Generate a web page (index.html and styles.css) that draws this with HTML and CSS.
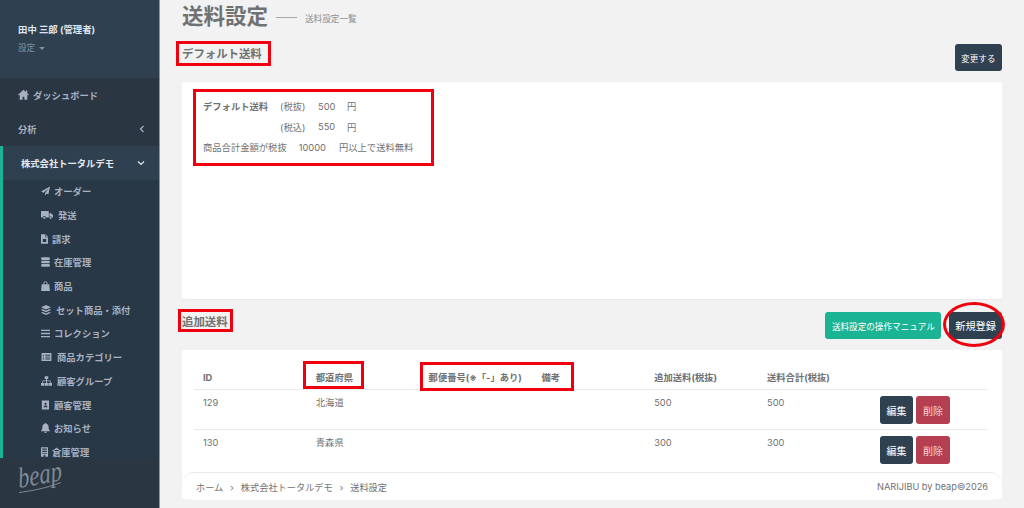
FILE: index.html
```html
<!DOCTYPE html>
<html lang="ja">
  <head>
    <meta charset="UTF-8" />
    <meta name="viewport" content="width=device-width, initial-scale=1.0" />
    <title>送料設定</title>
    <link rel="stylesheet" href="styles.css">
  </head>
  <body>
    <aside class="sidebar">
      <div class="profile">
        <div class="profile-name">田中 三郎 (管理者)</div>
        <div class="profile-link">設定 <span class="caret"></span></div>
      </div>

      <nav class="nav">
        <a class="nav-item">
          <svg class="icon" width="11" height="11" viewBox="0 0 16 15"><path d="M8 .5 0 7.700l1 1.100 1.500-1.300V15h4.200v-4.400h2.600V15h4.200V7.500l1.500 1.300 1-1.100-2.500-2.200V1.500h-2v2.400z"/></svg>
          ダッシュボード
        </a>
        <a class="nav-item nav-between">
          分析
          <svg class="chevron" width="8" height="8" viewBox="0 0 8 8"><path d="M5.500 1 2.500 4l3 3"/></svg>
        </a>
        <a class="nav-item nav-active">
          株式会社トータルデモ
          <svg class="chevron" width="8" height="8" viewBox="0 0 8 8"><path d="M1 2.500 4 5.500l3-3"/></svg>
        </a>
        <ul class="submenu">
          <li class="sub-item">
            <svg class="icon" width="9" height="10" viewBox="0 0 16 16"><path d="M16 0 0 9l4.500 2L13 4l-6 8v4l3-3.500 3 1.500z"/></svg>
            オーダー
          </li>
          <li class="sub-item sub-wide">
            <svg class="icon" width="12" height="10" viewBox="0 0 20 16"><path d="M1 1.500h11a1 1 0 0 1 1 1V12H8a2.500 2.500 0 0 0-5 0H1a1 1 0 0 1-1-1V2.500a1 1 0 0 1 1-1zM14 5h3l3 3.500V12h-1.500a2.500 2.500 0 0 0-4.500-.5z"/><circle cx="5.500" cy="13" r="1.800"/><circle cx="16" cy="13" r="1.800"/></svg>
            発送
          </li>
          <li class="sub-item">
            <svg class="icon" width="7" height="10" viewBox="0 0 12 16"><path fill-rule="evenodd" d="M0 0h7v5h5v11H0zM3 8v5h6V8zM8 0l4 4H8z"/></svg>
            請求
          </li>
          <li class="sub-item">
            <svg class="icon" width="9" height="10" viewBox="0 0 14 16"><rect y="0.500" width="14" height="4.300" rx="2"/><rect y="5.800" width="14" height="4.300" rx="2"/><rect y="11.100" width="14" height="4.300" rx="2"/></svg>
            在庫管理
          </li>
          <li class="sub-item">
            <svg class="icon" width="9" height="10" viewBox="0 0 14 16"><path d="M1 5h12l1 11H0z"/><path class="line" d="M4.500 6V3.500a2.500 2.500 0 0 1 5 0V6"/></svg>
            商品
          </li>
          <li class="sub-item sub-wide">
            <svg class="icon" width="10" height="10" viewBox="0 0 16 16"><path d="M8 0l8 3.500L8 7 0 3.500zM2.500 6.500 8 9l5.500-2.500L16 8l-8 3.500L0 8zM2.500 11 8 13.500 13.500 11 16 12.500 8 16 0 12.500z"/></svg>
            セット商品・添付
          </li>
          <li class="sub-item">
            <svg class="icon" width="9" height="9" viewBox="0 0 14 14"><path d="M0 1h14v2H0zM0 6h14v2H0zM0 11h14v2H0z"/></svg>
            コレクション
          </li>
          <li class="sub-item sub-wide">
            <svg class="icon" width="11" height="8" viewBox="0 0 16 13"><path fill-rule="evenodd" d="M0 0h16v13H0zM2 3v1.500h2V3zM6 3v1.500h8V3zM2 6v1.500h2V6zM6 6v1.500h8V6zM2 9v1.500h2V9zM6 9v1.500h8V9z"/></svg>
            商品カテゴリー
          </li>
          <li class="sub-item sub-wide">
            <svg class="icon" width="11" height="10" viewBox="0 0 16 14"><path d="M5.500 0h5v4h-1.700v2.200H14V10h2v4h-5v-4h2V7.500H8.800V10H10.500v4h-5v-4h2V7.500H3V10h2v4H0v-4h2V6.200h5.200V4H5.500z"/></svg>
            顧客グループ
          </li>
          <li class="sub-item sub-wide">
            <svg class="icon" width="8" height="10" viewBox="0 0 14 16"><path fill-rule="evenodd" d="M1.500 0H14v16H1.500zM8 4a2 2 0 1 0 0 4 2 2 0 0 0 0-4zM4.500 12h7c0-2-1.500-3-3.500-3s-3.500 1-3.500 3z"/></svg>
            顧客管理
          </li>
          <li class="sub-item">
            <svg class="icon" width="9" height="10" viewBox="0 0 14 16"><path d="M7 0a1.300 1.300 0 0 1 1.300 1.300C11 2 12 4 12 7c0 3 1 4 2 5v1H0v-1c1-1 2-2 2-5 0-3 1-5 3.700-5.700A1.300 1.300 0 0 1 7 0zM5 14h4a2 2 0 0 1-4 0z"/></svg>
            お知らせ
          </li>
          <li class="sub-item">
            <svg class="icon" width="7" height="10" viewBox="0 0 12 16"><path fill-rule="evenodd" d="M0 0h12v16H7.500v-3h-3v3H0zM2 2v2h8V2zM2 6v2h8V6zM2 10v1.500h8V10z"/></svg>
            倉庫管理
          </li>
        </ul>
      </nav>

      <div class="sidebar-logo">
        <span class="logo-text">beap</span>
        <svg class="logo-swash" width="46" height="14" viewBox="0 0 46 14"><path d="M2 12.500C14 11 30 8 44 2.500"/></svg>
      </div>
    </aside>

    <main class="main">
      <header class="page-title">
        <h1>送料設定</h1>
        <span class="title-rule"></span>
        <span class="title-sub">送料設定一覧</span>
      </header>

      <div class="section-head section-first">
        <h2>デフォルト送料</h2>
        <div class="actions">
          <button class="btn btn-dark btn-small">変更する</button>
        </div>
      </div>

      <section class="card card-default">
        <div class="fee-row">
          <b class="fee-label">デフォルト送料</b>
          <span class="fee-tax">(税抜)</span>
          <span class="fee-value">500</span>
          <span>円</span>
        </div>
        <div class="fee-row">
          <span class="fee-label"></span>
          <span class="fee-tax">(税込)</span>
          <span class="fee-value">550</span>
          <span>円</span>
        </div>
        <div class="fee-row fee-free">
          <span>商品合計金額が税抜</span>
          <span class="fee-amount">10000</span>
          <span>円以上で送料無料</span>
        </div>
      </section>

      <div class="section-head">
        <h2>追加送料</h2>
        <div class="actions">
          <button class="btn btn-green btn-small">送料設定の操作マニュアル</button>
          <button class="btn btn-dark">新規登録</button>
        </div>
      </div>

      <section class="card card-table">
        <table class="fee-table">
          <thead>
            <tr>
              <th>ID</th>
              <th>都道府県</th>
              <th>郵便番号(※「-」あり)</th>
              <th>備考</th>
              <th>追加送料(税抜)</th>
              <th>送料合計(税抜)</th>
              <th></th>
            </tr>
          </thead>
          <tbody>
            <tr>
              <td>129</td>
              <td>北海道</td>
              <td></td>
              <td></td>
              <td>500</td>
              <td>500</td>
              <td>
                <div class="row-actions">
                  <button class="btn btn-dark btn-row">編集</button>
                  <button class="btn btn-red btn-row">削除</button>
                </div>
              </td>
            </tr>
            <tr>
              <td>130</td>
              <td>青森県</td>
              <td></td>
              <td></td>
              <td>300</td>
              <td>300</td>
              <td>
                <div class="row-actions">
                  <button class="btn btn-dark btn-row">編集</button>
                  <button class="btn btn-red btn-row">削除</button>
                </div>
              </td>
            </tr>
          </tbody>
        </table>
      </section>

      <footer class="footer">
        <div class="crumbs">
          <span>ホーム</span><span class="crumb-sep">›</span><span>株式会社トータルデモ</span><span class="crumb-sep">›</span><span>送料設定</span>
        </div>
        <div class="copyright">NARIJIBU by beap©2026</div>
      </footer>
    </main>

    <!-- red marks drawn over the screenshot -->
    <div class="mark mark-default-title"></div>
    <div class="mark mark-default-body"></div>
    <div class="mark mark-extra-title"></div>
    <div class="mark mark-pref"></div>
    <div class="mark mark-zip"></div>
    <div class="mark mark-circle"></div>
  </body>
</html>
```

FILE: styles.css
```css
* {
  box-sizing: border-box;
}

html,
body {
  height: 100%;
  margin: 0;
  overflow: hidden;
}

body {
  position: relative;
  display: flex;
  background-color: #f2f2f2;
  color: #6f7173;
  font-family: Inter, "Noto Sans CJK JP", sans-serif;
  font-size: 9.3px;
}

/* sidebar */
.sidebar {
  display: flex;
  flex-direction: column;
  flex: 0 0 160px;
  height: 100%;
  background-color: #2b3643;
  border-right: 1px solid #8b95a0;
}

.profile {
  flex: 0 0 78px;
  padding-top: 23px;
  background-color: #2f4050;
}

.profile-name {
  padding-left: 18px;
  color: #dfe4ed;
  font-size: 9.4px;
  font-weight: 700;
  line-height: 14px;
}

.profile-link {
  margin-top: 4px;
  padding-left: 18px;
  color: #7f8f9f;
  font-size: 8.6px;
  line-height: 14px;
}

.caret {
  display: inline-block;
  margin-left: 1px;
  vertical-align: 1px;
  border-top: 3px solid #7f8f9f;
  border-left: 3px solid transparent;
  border-right: 3px solid transparent;
}

.nav {
  flex: 1;
  min-height: 0;
  overflow: hidden;
}

.nav-item {
  display: flex;
  align-items: center;
  gap: 4px;
  height: 34px;
  padding: 0 13px 1px 18px;
  color: #a7b1c2;
  font-weight: 700;
}

.nav-between,
.nav-active {
  justify-content: space-between;
}

.nav-active {
  padding-right: 14px;
  border-left: 3px solid #1ab394;
  background-color: #2f4050;
  color: #e6e9ee;
}

.chevron path {
  fill: none;
  stroke: currentColor;
  stroke-width: 1.2;
}

.icon {
  flex: none;
  fill: currentColor;
}

.icon .line {
  fill: none;
  stroke: currentColor;
  stroke-width: 1.5;
}

.submenu {
  margin: 0;
  padding: 0 0 0 38px;
  list-style: none;
  background-color: #293846;
  border-left: 3px solid #1ab394;
}

.sub-item {
  display: flex;
  align-items: center;
  gap: 4px;
  height: 23.7px;
  padding-bottom: 1px;
  color: #a7b1c2;
  font-weight: 700;
}

.sub-wide {
  gap: 5px;
}

.sidebar-logo {
  position: relative;
  flex: 0 0 50px;
  padding: 4px 0 0 18px;
  background-color: #2b3643;
}

.logo-text {
  display: inline-block;
  color: #7f8a96;
  font-family: "Liberation Serif", serif;
  font-size: 29px;
  font-style: italic;
  line-height: 32px;
  transform: scaleX(0.78) rotate(-8deg);
  transform-origin: left center;
}

.logo-swash {
  position: absolute;
  left: 17px;
  top: 22px;
  fill: none;
  stroke: #7f8a96;
  stroke-width: 1;
}

/* main column */
.main {
  position: relative;
  flex: 1;
  min-width: 0;
  height: 100%;
  padding: 0 22px;
}

.page-title {
  display: flex;
  align-items: center;
  height: 37px;
  padding-bottom: 5px;
}

.page-title h1 {
  margin: 0;
  font-size: 21.5px;
  font-weight: 700;
  line-height: 32px;
}

.title-rule {
  width: 21px;
  height: 1px;
  margin: 3px 8px 0;
  background-color: #a5a7a9;
}

.title-sub {
  margin-top: 3px;
  color: #8e9092;
  font-size: 8.6px;
}

.section-head {
  display: flex;
  justify-content: space-between;
  height: 27px;
  margin-top: 12px;
}

.section-first {
  margin-top: 7px;
}

.section-head h2 {
  margin: 0;
  font-size: 11.4px;
  font-weight: 700;
  line-height: 20px;
}

.actions {
  display: flex;
  gap: 8px;
}

.card {
  margin-top: 11px;
  background-color: #fff;
  border-radius: 3px;
}

.card-default {
  height: 218px;
  padding: 14px 21px;
  border-bottom: 1px solid #e9e9e9;
}

.card-table {
  height: 149px;
  padding: 12px 15px 0 12px;
  overflow: hidden;
}

.fee-row {
  display: flex;
  height: 20.5px;
  align-items: center;
}

.fee-label {
  width: 77px;
}

.fee-tax {
  width: 38px;
}

.fee-value {
  width: 29px;
}

.fee-free {
  gap: 12px;
}

.fee-amount {
  margin-right: 1px;
}

/* buttons */
.btn {
  height: 27px;
  padding: 0 6px;
  border: none;
  border-radius: 3px;
  color: #fff;
  font-family: inherit;
  font-size: 10.2px;
  white-space: nowrap;
}

.btn-small {
  padding: 0 6.5px;
  font-size: 8.6px;
}

.btn-dark {
  background-color: #2f4050;
}

.btn-green {
  background-color: #1ab394;
}

.btn-red {
  background-color: #b53f50;
  color: #f0d5d9;
}

.btn-row {
  width: 33.5px;
  height: 28px;
  padding: 0;
  font-size: 10px;
}

/* table */
.fee-table {
  width: 100%;
  border-collapse: collapse;
  table-layout: fixed;
}

.fee-table th {
  width: 112.8px;
  padding: 9px 0 4px 9px;
  border-bottom: 1px solid #e7eaec;
  font-weight: 700;
  line-height: 14px;
  text-align: left;
  white-space: nowrap;
}

.fee-table th:last-child {
  width: auto;
}

.fee-table td {
  padding: 6px 0 5px 9px;
  border-bottom: 1px solid #e7eaec;
  line-height: 14px;
  vertical-align: top;
}

.fee-table tr:last-child td {
  border-bottom: none;
}

.row-actions {
  display: flex;
  gap: 3px;
}

/* footer sits on top of the end of the table */
.footer {
  position: absolute;
  left: 22px;
  right: 22px;
  bottom: 8px;
  display: flex;
  justify-content: space-between;
  align-items: center;
  height: 28px;
  padding: 0 14px;
  background-color: #fff;
  border-top: 1px solid #e7eaec;
  border-radius: 12px;
  font-size: 9.2px;
}

.crumb-sep {
  margin: 0 7px;
}

/* red annotation marks */
.mark {
  position: absolute;
  border: 3px solid #f0000f;
}

.mark-default-title {
  left: 176px;
  top: 41px;
  width: 95px;
  height: 25px;
}

.mark-default-body {
  left: 193px;
  top: 89px;
  width: 241px;
  height: 77px;
}

.mark-extra-title {
  left: 178px;
  top: 309px;
  width: 55px;
  height: 23px;
}

.mark-pref {
  left: 303px;
  top: 361px;
  width: 61px;
  height: 28px;
}

.mark-zip {
  left: 420px;
  top: 362px;
  width: 154px;
  height: 29px;
}

.mark-circle {
  left: 943px;
  top: 302px;
  width: 62px;
  height: 45px;
  border-radius: 50%;
}
```
